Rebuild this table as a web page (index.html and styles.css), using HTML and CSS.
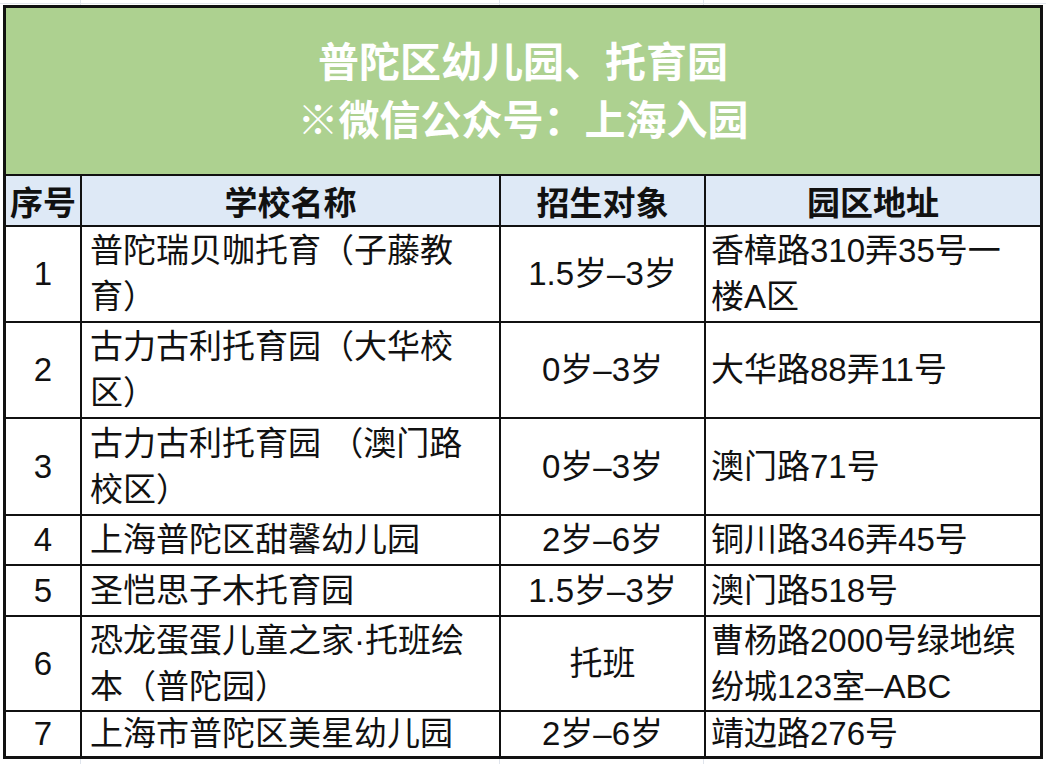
FILE: index.html
```html
<!DOCTYPE html>
<html lang="zh-CN">
<head>
<meta charset="utf-8">
<title>普陀区幼儿园、托育园</title>
<link rel="stylesheet" href="styles.css">
</head>
<body>
<div class="sheet">
  <div class="title">普陀区幼儿园、托育园<br>※微信公众号：上海入园</div>

  <div class="th">序号</div>
  <div class="th">学校名称</div>
  <div class="th">招生对象</div>
  <div class="th">园区地址</div>

  <div class="td num">1</div>
  <div class="td name">普陀瑞贝咖托育（子藤教育）</div>
  <div class="td age">1.5岁–3岁</div>
  <div class="td addr">香樟路310弄35号一楼A区</div>

  <div class="td num">2</div>
  <div class="td name">古力古利托育园（大华校区）</div>
  <div class="td age">0岁–3岁</div>
  <div class="td addr">大华路88弄11号</div>

  <div class="td num">3</div>
  <div class="td name">古力古利托育园 （澳门路校区）</div>
  <div class="td age">0岁–3岁</div>
  <div class="td addr">澳门路71号</div>

  <div class="td num">4</div>
  <div class="td name">上海普陀区甜馨幼儿园</div>
  <div class="td age">2岁–6岁</div>
  <div class="td addr">铜川路346弄45号</div>

  <div class="td num">5</div>
  <div class="td name">圣恺思子木托育园</div>
  <div class="td age">1.5岁–3岁</div>
  <div class="td addr">澳门路518号</div>

  <div class="td num">6</div>
  <div class="td name">恐龙蛋蛋儿童之家·托班绘本（普陀园）</div>
  <div class="td age">托班</div>
  <div class="td addr">曹杨路2000号绿地缤纷城123室–ABC</div>

  <div class="td num">7</div>
  <div class="td name">上海市普陀区美星幼儿园</div>
  <div class="td age">2岁–6岁</div>
  <div class="td addr">靖边路276号</div>
</div>
</body>
</html>
```

FILE: styles.css
```css
html, body {
  margin: 0;
  padding: 0;
}

body {
  width: 1046px;
  height: 764px;
  overflow: hidden;
  background-color: #ffffff;
  background-image:
    linear-gradient(to right, transparent 80px, #dfe4ec 80px, #dfe4ec 81px, transparent 81px),
    linear-gradient(to right, transparent 499px, #dfe4ec 499px, #dfe4ec 500px, transparent 500px),
    linear-gradient(to right, transparent 703px, #dfe4ec 703px, #dfe4ec 704px, transparent 704px),
    linear-gradient(to bottom, transparent 3px, #e3e7ee 3px, #e3e7ee 4px, transparent 4px);
  font-family: "Liberation Sans", "Noto Sans CJK SC", sans-serif;
  color: #111111;
  padding-top: 5px;
  padding-left: 3px;
  box-sizing: border-box;
}

.sheet {
  width: 1040px;
  box-sizing: border-box;
  border: 3px solid #111111;
  background: #111111;
  display: grid;
  grid-template-columns: 74px 417px 203px 334px;
  grid-template-rows: 166px 49px 94px 94px 95px 48px 49px 93px 44px;
  gap: 2px;
}

.title {
  grid-column: 1 / -1;
  background: #add190;
  color: #ffffff;
  font-size: 41px;
  font-weight: 700;
  line-height: 58px;
  display: flex;
  align-items: center;
  justify-content: center;
  text-align: center;
  padding-top: 2px;
}

.th {
  background: #dee9f6;
  font-size: 33px;
  font-weight: 700;
  display: flex;
  align-items: center;
  justify-content: center;
  white-space: nowrap;
}

.td {
  background: #ffffff;
  font-size: 33px;
  line-height: 46px;
  display: flex;
  align-items: center;
}

.num {
  justify-content: center;
}

.name {
  padding: 0 24px 0 8px;
}

.age {
  justify-content: center;
  white-space: nowrap;
}

.addr {
  padding: 0 14px 0 5px;
}
```
